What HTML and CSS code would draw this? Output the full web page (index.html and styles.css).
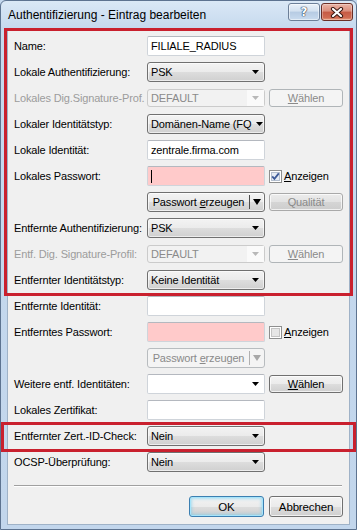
FILE: index.html
```html
<!DOCTYPE html>
<html lang="de">
    <head>
        <meta charset="UTF-8" />
        <meta name="viewport" content="width=device-width, initial-scale=1.0" />
        <title>Authentifizierung - Eintrag bearbeiten</title>
        <link rel="stylesheet" href="styles.css">
    </head>
    <body>
        <div class="window">
            <div class="titlebar">
                <span class="title">Authentifizierung - Eintrag bearbeiten</span>
                <div class="caption-buttons">
                    <div class="caption help">?</div>
                    <div class="caption close">
                        <svg width="14" height="11" viewBox="0 0 14 11">
                            <path d="M3 2L11 9M11 2L3 9" stroke="#3a1812" stroke-width="4.2" stroke-linecap="round" fill="none" />
                            <path d="M3 2L11 9M11 2L3 9" stroke="#fff" stroke-width="2.2" stroke-linecap="round" fill="none" />
                        </svg>
                    </div>
                </div>
            </div>

            <div class="client">
                <div class="form">
                    <div class="row">
                        <label>Name:</label>
                        <div class="edit">FILIALE_RADIUS</div>
                    </div>
                    <div class="row">
                        <label>Lokale Authentifizierung:</label>
                        <div class="combo"><span class="text">PSK</span><span class="drop"><svg class="arrow" width="7" height="4" viewBox="0 0 7 4"><path d="M0 0h7L3.5 4z" /></svg></span></div>
                    </div>
                    <div class="row">
                        <label class="disabled">Lokales Dig.Signature-Prof.</label>
                        <div class="combo disabled"><span class="text">DEFAULT</span><span class="drop"><svg class="arrow" width="7" height="4" viewBox="0 0 7 4"><path d="M0 0h7L3.5 4z" /></svg></span></div>
                        <div class="btn disabled"><span><u>W</u>ählen</span></div>
                    </div>
                    <div class="row">
                        <label>Lokaler Identitätstyp:</label>
                        <div class="combo"><span class="text">Domänen-Name (FQ</span><span class="drop"><svg class="arrow" width="7" height="4" viewBox="0 0 7 4"><path d="M0 0h7L3.5 4z" /></svg></span></div>
                    </div>
                    <div class="row">
                        <label>Lokale Identität:</label>
                        <div class="edit">zentrale.firma.com</div>
                    </div>
                    <div class="row">
                        <label>Lokales Passwort:</label>
                        <div class="edit pink"><span class="caret"></span></div>
                        <div class="check">
                            <svg width="13" height="13" viewBox="0 0 13 13">
                                <rect x="0.5" y="0.5" width="12" height="12" fill="#fff" stroke="#8e8f8f" />
                                <rect x="2.5" y="2.5" width="8" height="8" fill="#e6ecf4" stroke="#b4bfcf" />
                                <path d="M3.2 6.4L5.4 8.8L9.8 3.4" stroke="#3d5a98" stroke-width="1.8" fill="none" />
                            </svg>
                            <span><u>A</u>nzeigen</span>
                        </div>
                    </div>
                    <div class="row">
                        <span></span>
                        <div class="split">
                            <span class="split-label">Passwort <u>e</u>rzeugen</span>
                            <span class="split-sep"></span>
                            <span class="split-drop"><svg width="8" height="6" viewBox="0 0 8 6"><path d="M0 0h8L4 6z" /></svg></span>
                        </div>
                        <div class="btn dim"><span>Qualität</span></div>
                    </div>
                    <div class="row">
                        <label>Entfernte Authentifizierung:</label>
                        <div class="combo"><span class="text">PSK</span><span class="drop"><svg class="arrow" width="7" height="4" viewBox="0 0 7 4"><path d="M0 0h7L3.5 4z" /></svg></span></div>
                    </div>
                    <div class="row">
                        <label class="disabled">Entf. Dig. Signature-Profil:</label>
                        <div class="combo disabled"><span class="text">DEFAULT</span><span class="drop"><svg class="arrow" width="7" height="4" viewBox="0 0 7 4"><path d="M0 0h7L3.5 4z" /></svg></span></div>
                        <div class="btn disabled"><span><u>W</u>ählen</span></div>
                    </div>
                    <div class="row">
                        <label>Entfernter Identitätstyp:</label>
                        <div class="combo"><span class="text">Keine Identität</span><span class="drop"><svg class="arrow" width="7" height="4" viewBox="0 0 7 4"><path d="M0 0h7L3.5 4z" /></svg></span></div>
                    </div>
                    <div class="row">
                        <label>Entfernte Identität:</label>
                        <div class="edit"></div>
                    </div>
                    <div class="row">
                        <label>Entferntes Passwort:</label>
                        <div class="edit pink"></div>
                        <div class="check">
                            <svg width="13" height="13" viewBox="0 0 13 13">
                                <rect x="0.5" y="0.5" width="12" height="12" fill="#fff" stroke="#8e8f8f" />
                                <rect x="2.5" y="2.5" width="8" height="8" fill="#e6e6e6" stroke="#c4c4c4" />
                            </svg>
                            <span><u>A</u>nzeigen</span>
                        </div>
                    </div>
                    <div class="row">
                        <span></span>
                        <div class="split disabled">
                            <span class="split-label">Passwort <u>e</u>rzeugen</span>
                            <span class="split-sep"></span>
                            <span class="split-drop"><svg width="8" height="6" viewBox="0 0 8 6"><path d="M0 0h8L4 6z" /></svg></span>
                        </div>
                    </div>
                    <div class="row">
                        <label>Weitere entf. Identitäten:</label>
                        <div class="combo editable"><span class="text"></span><span class="drop"><svg class="arrow" width="7" height="4" viewBox="0 0 7 4"><path d="M0 0h7L3.5 4z" /></svg></span></div>
                        <div class="btn"><span><u>W</u>ählen</span></div>
                    </div>
                    <div class="row">
                        <label>Lokales Zertifikat:</label>
                        <div class="edit"></div>
                    </div>
                    <div class="row">
                        <label>Entfernter Zert.-ID-Check:</label>
                        <div class="combo"><span class="text">Nein</span><span class="drop"><svg class="arrow" width="7" height="4" viewBox="0 0 7 4"><path d="M0 0h7L3.5 4z" /></svg></span></div>
                    </div>
                    <div class="row">
                        <label>OCSP-Überprüfung:</label>
                        <div class="combo"><span class="text">Nein</span><span class="drop"><svg class="arrow" width="7" height="4" viewBox="0 0 7 4"><path d="M0 0h7L3.5 4z" /></svg></span></div>
                    </div>
                </div>

                <div class="separator"></div>

                <div class="footer">
                    <div class="btn default ok"><span>OK</span></div>
                    <div class="btn cancel"><span>Abbrechen</span></div>
                </div>
            </div>

            <div class="mark mark-top"></div>
            <div class="mark mark-bottom"></div>
        </div>
    </body>
</html>
```

FILE: styles.css
```css
* {
    box-sizing: border-box;
}

body {
    margin: 0;
    font-family: "Liberation Sans", Arial, sans-serif;
    font-size: 11px;
    letter-spacing: -0.15px;
    color: #000;
    background: #c4d8ee;
}

.window {
    position: relative;
    display: flex;
    flex-direction: column;
    width: 357px;
    height: 530px;
    border: 1px solid #5d7390;
    border-radius: 6px 6px 0 0;
    background: linear-gradient(to bottom, #dae8f6 0, #c6d9ee 27px, #c2d6ec 100%);
}

/* title bar */
.titlebar {
    display: flex;
    justify-content: space-between;
    height: 27px;
    padding: 0 3px 0 7px;
}

.title {
    align-self: center;
    font-size: 12px;
    letter-spacing: 0;
    margin-top: 1px;
}

.caption-buttons {
    display: flex;
    gap: 1px;
    margin-top: 2px;
}

.caption {
    display: flex;
    align-items: center;
    justify-content: center;
    width: 32px;
    height: 18px;
    border: 1px solid #6c7f98;
    border-radius: 3px;
}

.help {
    background: linear-gradient(to bottom, #e9f1f9 0%, #d3e1f0 45%, #b6cbe3 50%, #c9dbee 100%);
    box-shadow: inset 0 0 0 1px rgba(255, 255, 255, 0.5);
    color: #fff;
    font-family: "DejaVu Sans", sans-serif;
    font-weight: bold;
    font-size: 12px;
    text-shadow: 0 0 1px #20324d, 0 0 1px #20324d, 0 0 1px #20324d;
}

.close {
    border-color: #6b2e26;
    background: linear-gradient(to bottom, #eab4a6 0%, #da8d7b 45%, #c55a44 50%, #d06b52 85%, #e79e7f 100%);
    box-shadow: inset 0 0 0 1px rgba(255, 255, 255, 0.3);
}

/* client area */
.client {
    flex: 1;
    display: flex;
    flex-direction: column;
    margin: 0 6px 4px;
    background: #f0f0f0;
    border: 1px solid #9fb2c7;
}

.form {
    padding: 4px 0 0 6px;
}

.row {
    display: grid;
    grid-template-columns: 129px 118px 74px;
    column-gap: 4px;
    align-items: center;
    height: 26px;
}

.row label {
    white-space: nowrap;
}

.row label.disabled {
    color: #9c9c9c;
}

u {
    text-decoration: underline;
    text-underline-offset: 1px;
}

.edit {
    display: flex;
    align-items: center;
    height: 20px;
    padding: 0 3px;
    background: #fff;
    border: 1px solid #cfd4da;
    border-top-color: #b4b8bf;
    border-radius: 2px;
    white-space: nowrap;
    overflow: hidden;
}

.edit.pink {
    background: #ffcaca;
}

.caret {
    width: 1px;
    height: 13px;
    background: #000;
}

.combo {
    display: flex;
    align-items: center;
    height: 20px;
    padding-left: 3px;
    border: 1px solid #707070;
    border-radius: 3px;
    background: linear-gradient(to bottom, #f3f3f3 0%, #ebebeb 50%, #dddddd 51%, #d0d0d0 100%);
    box-shadow: inset 0 0 0 1px rgba(255, 255, 255, 0.6);
}

.combo .text {
    flex: 1;
    white-space: nowrap;
}

.combo .drop {
    display: flex;
    align-items: center;
    justify-content: center;
    flex: none;
    width: 17px;
    align-self: stretch;
}

.combo .arrow {
    fill: #000;
}

.combo.disabled {
    height: 18px;
    border-color: #cbcbcb;
    background: #f2f2f2;
    box-shadow: none;
    color: #8a8a8a;
}

.combo.disabled .drop {
    background: #fafafa;
}

.combo.disabled .arrow {
    fill: #b8b8b8;
}

.combo.editable {
    background: #fff;
    border-color: #cfd4da;
    border-top-color: #b4b8bf;
    border-radius: 2px;
    box-shadow: none;
}

/* buttons */
.btn {
    display: flex;
    align-items: center;
    justify-content: center;
    height: 18px;
    border: 1px solid #707070;
    border-radius: 3px;
    background: linear-gradient(to bottom, #f3f3f3 0%, #ebebeb 50%, #dddddd 51%, #cfcfcf 100%);
    box-shadow: inset 0 0 0 1px rgba(255, 255, 255, 0.7);
    white-space: nowrap;
}

.btn.disabled {
    border-color: #b0b5b8;
    background: #f4f4f4;
    box-shadow: none;
    color: #8a8a8a;
}

.btn.dim {
    border-color: #a9a9a9;
    background: linear-gradient(to bottom, #ececec 0%, #e2e2e2 50%, #d5d5d5 51%, #cdcdcd 100%);
    color: #8a8a8a;
}

.check {
    display: flex;
    align-items: center;
    gap: 2px;
    grid-column: 3;
}

.check svg {
    flex: none;
}

.split {
    display: flex;
    align-items: center;
    height: 20px;
    border: 1px solid #707070;
    border-radius: 3px;
    background: linear-gradient(to bottom, #f3f3f3 0%, #ebebeb 50%, #dddddd 51%, #cfcfcf 100%);
    box-shadow: inset 0 0 0 1px rgba(255, 255, 255, 0.7);
}

.split-label {
    flex: 1;
    text-align: center;
    white-space: nowrap;
}

.split-sep {
    width: 1px;
    height: 14px;
    background: #4d4d4d;
}

.split-drop {
    display: flex;
    justify-content: center;
    width: 14px;
}

.split-drop svg {
    fill: #000;
}

.split.disabled {
    border-color: #b8bcbf;
    background: #f4f4f4;
    box-shadow: none;
    color: #8a8a8a;
}

.split.disabled .split-sep {
    background: #b0b0b0;
}

.split.disabled .split-drop svg {
    fill: #a8a8a8;
}

/* bottom */
.separator {
    height: 2px;
    margin: 10px 7px 0 6px;
    border-top: 1px solid #a0a0a0;
    border-bottom: 1px solid #fff;
}

.footer {
    display: flex;
    justify-content: flex-end;
    gap: 5px;
    margin-top: 9px;
    padding-right: 6px;
}

.footer .btn {
    height: 21px;
    font-size: 11.5px;
}

.ok {
    width: 75px;
}

.cancel {
    width: 74px;
}

.btn.default {
    border-color: #3c7fb1;
    box-shadow: inset 0 0 0 1px #a6e4fa, inset 0 0 3px 2px rgba(90, 200, 240, 0.45);
}

/* red annotation frames */
.mark {
    position: absolute;
    border: 3px solid #c9202e;
}

.mark-top {
    left: 3px;
    top: 27px;
    width: 349px;
    height: 268px;
}

.mark-bottom {
    left: 0;
    top: 421px;
    width: 355px;
    height: 30px;
}
```
